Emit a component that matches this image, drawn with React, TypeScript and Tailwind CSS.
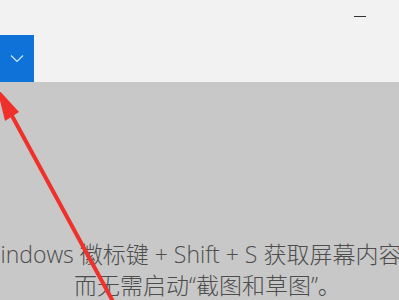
export default function App() {
  return (
    <div className="relative w-[399px] h-[300px] overflow-hidden bg-[#c8c8c8]" style={{ fontFamily: '"Open Sans", "Noto Sans CJK SC", sans-serif' }}>
      {/* top bar */}
      <div className="h-[82px] bg-[#f2f2f2] flex flex-col">
        <div className="h-[35px] flex justify-end">
          <div className="w-[12px] h-px bg-[#333] mt-4 mr-[33px]" />
        </div>
        <div className="w-[34px] h-[47px] bg-[#0e72d8] flex items-center justify-center">
          <svg width="14" height="9" viewBox="0 0 14 9" fill="none">
            <path d="M1 1.5 L7 7.5 L13 1.5" stroke="#d6e8fa" strokeWidth="1.2" />
          </svg>
        </div>
      </div>

      {/* caption */}
      <div className="pt-[157px] flex flex-col text-[#4d4d4d] text-[23px] font-light leading-[31px] whitespace-nowrap">
        <div className="ml-[-20px]">Windows 徽标键 + Shift + S 获取屏幕内容，</div>
        <div className="ml-[74px]">而无需启动“截图和草图”。</div>
      </div>

      {/* red arrow */}
      <svg className="absolute left-0 top-0" width="399" height="300" viewBox="0 0 399 300">
        <line x1="11" y1="114" x2="122" y2="318" stroke="#f0302a" strokeWidth="4" />
        <polygon points="-3,88 19,112 5,121" fill="#f0302a" />
      </svg>
    </div>
  );
}
